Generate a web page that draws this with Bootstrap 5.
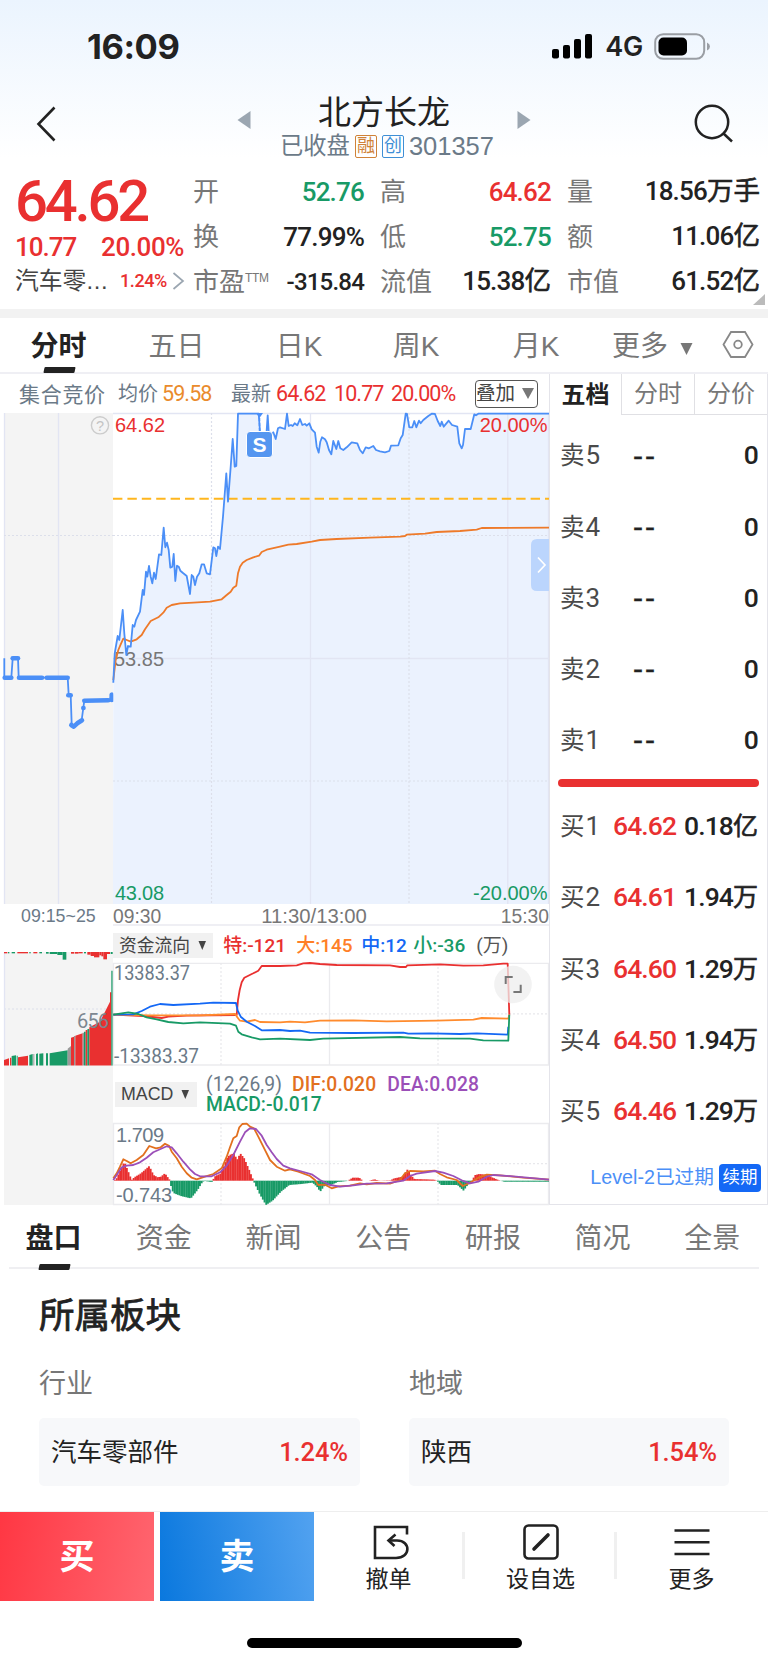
<!DOCTYPE html>
<html lang="zh-CN">
<head>
<meta charset="utf-8">
<meta name="viewport" content="width=device-width, initial-scale=1">
<title>北方长龙 301357</title>
<link rel="stylesheet" href="https://cdn.jsdelivr.net/npm/bootstrap@5.3.0/dist/css/bootstrap.min.css">
<style>
:root{--up:#e93030;--down:#189a66;--ink:#222;--mute:#777;--slate:#6b7a88;--line:#efeff4}
body{width:768px;height:1662px;margin:0;background:#fff;color:var(--ink);font-family:"Liberation Sans","Noto Sans CJK SC",sans-serif;line-height:1;overflow:hidden;white-space:nowrap}
svg{display:block;flex:none;overflow:visible}
.din{font-family:Roboto,"Noto Sans CJK SC",sans-serif}
.up{color:var(--up)}.down{color:var(--down)}.slate{color:var(--slate)}.mute{color:var(--mute)}
.hero{height:168px;background:linear-gradient(#ebf4fe,#fff 158px)}
.status-row{height:90px;padding:2px 57px 0 87px}
.clock{font:700 34.5px Inter,sans-serif;letter-spacing:-.4px}
.net{font:600 27px Inter,sans-serif;letter-spacing:-.2px}
.title-row{height:78px;padding:0 34px 0 36px}
.stock{font-size:33px;height:37px;line-height:37px}
.sub{font-size:23.3px;height:27px;color:var(--slate)}
.tag{width:22px;height:23px;border:1px solid;border-radius:2px;font-size:18px;line-height:20px;text-align:center}
.quote{height:141px;padding-right:8px}
.q-left{width:193px;padding-left:15px}
.big{font-weight:500;font-size:58px;letter-spacing:-3.2px;height:65px;line-height:67px}
.chg{font-size:26px;font-weight:500;letter-spacing:-1px;height:28px;line-height:28px}
.q-grid{display:grid;grid-template-columns:187px 187px 193px;grid-auto-rows:45px;padding-top:1px}
.q-grid>div{display:flex;justify-content:space-between;align-items:center;padding-right:16px;font-size:26px;color:var(--mute)}
.q-grid>div:nth-child(3n){padding-right:0}
.q-grid b{font-weight:500;letter-spacing:-.8px;color:var(--ink)}
.q-grid b i{font-style:normal;font-weight:400;letter-spacing:0;font-size:26.5px;-webkit-text-stroke:.6px}
.q-grid b.up{color:var(--up)}.q-grid b.down{color:var(--down)}
.q-grid sup{font-size:12px;top:-9px;letter-spacing:-.3px}
.band{height:9px;background:#f2f2f2}
.k-tabs{height:56px;border-bottom:2px solid var(--line);font-size:28px;color:var(--mute)}
.k-tabs>span{display:flex;justify-content:center;align-items:center;height:54px;position:relative;padding-top:4px}
.on{color:var(--ink)!important;font-weight:700}
.on::after{content:"";position:absolute;bottom:-1px;left:50%;width:31px;margin-left:-15px;height:6px;background:var(--ink);transform:skewX(-12deg);border-radius:1px}
.main{height:831px}
.left-pane{width:549px}
.info{height:39px;font-size:21px;padding-top:1px}
.info .din{font-size:21.5px;letter-spacing:-.9px}
.pick{width:63px;height:28px;border:1px solid #555;border-radius:4px;font-size:19.5px;color:#444}
.axis{height:22px;font-size:19.3px;color:#777;border-bottom:2px solid var(--line);padding-top:5px}
.chip{background:#f1f1f1;color:#444;height:25px;font-size:17.8px;padding:0 6px 0 6px}
.fund-head{height:37px;font-size:19px;font-weight:500}
.macd-head{height:57px;font-size:19.3px;font-weight:500}
.auction{width:113px}.session{width:436px}
.auction .cap{height:47px;font-size:17.8px;color:var(--slate);padding:4px 0 0 21px}
.book{width:219px;border:solid #e4e4ea;border-width:0 1px 1px 1px}
.b-tabs{height:41px;font-size:24px}
.b-tabs span{display:flex;align-items:center;justify-content:center;color:var(--mute)}
.b-tabs span+span{border-left:1px solid #e0e0e4;border-bottom:1px solid #e0e0e4}
.lv{display:grid;grid-template-columns:53px 1fr auto;align-items:center;height:71.2px;padding:0 9px 0 10px;font-size:24.5px;color:#4a4a4a}
.lv>b{font-weight:500;font-size:26.5px;letter-spacing:-.9px}
.lv>b.nil{font:400 30px "Liberation Sans",sans-serif;letter-spacing:2px;-webkit-text-stroke:.4px;color:#222}
.lv>b:last-child{color:var(--ink);text-align:right}
.lv>b i{font-style:normal;font-weight:400;letter-spacing:0;font-size:25px;-webkit-text-stroke:.6px}
.lv>span .din{font-size:26px;margin-left:1px}
.split{height:8px;border-radius:4px;background:var(--up);margin:0 8px 0 8px}
.level{height:30px;font-size:19.7px;color:#4b8ff7;padding-right:6px}
.renew{background:#1468f5;color:#fff;border-radius:4px;width:42px;height:28px;font-size:17.5px}
.f-tabs{height:64px;margin:0 9px;border-bottom:2px solid #efeff2;font-size:28px}
.f-tabs span{position:relative;width:109.7px;height:64px;display:flex;align-items:center;justify-content:center;color:var(--mute);flex:none;padding-top:4px}
.sector{padding:24px 39px 0 39px;height:242px}
.sector h2{font-size:35.5px;line-height:46px;margin:0;font-weight:400;-webkit-text-stroke:.8px}
.pill{height:68px;border-radius:5px;background:#f7f8fa;font-size:25.5px;padding:1px 12px 0}
.pill b{font-weight:500;font-size:25.5px;letter-spacing:-.1px}
.dock{height:90px;border-top:1px solid #eee}
.trade{height:89px;width:154px;color:#fff;font-size:35px;font-weight:700}
.buy{background:linear-gradient(100deg,#ff3743,#ff6670)}
.sell{background:linear-gradient(80deg,#0a78de,#52a2f0);margin-left:6px}
.act{height:89px;font-size:23px;position:relative}
.act+.act::before{content:"";position:absolute;left:-1px;top:20px;width:3px;height:47px;background:#f0f0f0}
.home-bar{width:275px;height:10px;border-radius:5px;background:#000;margin:37px 0 0 247px}
svg text{font-family:"Liberation Sans",sans-serif;font-size:20px}
svg text.d{font-family:Roboto,sans-serif;font-size:20px}
.g{stroke:#e2e5f3;stroke-width:1.3;fill:none}.gd{stroke:#dcdfea;stroke-width:1.2;stroke-dasharray:2 2;fill:none}
.h{stroke:#ebebee;stroke-width:1.3;fill:none}.hd{stroke:#e8e8ec;stroke-width:1.2;stroke-dasharray:2 2;fill:none}
.ln{fill:none;stroke-width:1.8;stroke-linejoin:round}
</style>
</head>
<body>
<header class="hero">
  <div class="status-row d-flex align-items-center">
    <span class="clock">16:09</span>
    <svg class="ms-auto" width="41" height="26" viewBox="0 0 41 26"><g fill="#000"><rect x="0" y="16" width="7" height="9.500" rx="2"/><rect x="11" y="12" width="7" height="13.500" rx="2"/><rect x="22" y="6" width="7" height="19.500" rx="2"/><rect x="33" y="1" width="7" height="24.500" rx="2"/></g></svg>
    <span class="net" style="margin-left:12px">4G</span>
    <svg style="margin-left:11px" width="57" height="27" viewBox="0 0 57 27"><rect x="1.200" y="1.200" width="49" height="24.600" rx="8" fill="none" stroke="#9a9ea4" stroke-width="2"/><rect x="4.500" y="4.500" width="28.500" height="18" rx="5"/><path d="M53 9.500q3 1.500 3 4t-3 4z" fill="#9a9ea4"/></svg>
  </div>
  <div class="title-row d-flex">
    <svg width="22" height="36" viewBox="0 0 22 36" style="margin-top:16px"><path d="M18.500 1.500 2.500 18l16 16.500" fill="none" stroke="#222" stroke-width="2.600"/></svg>
    <svg width="14" height="20" style="margin:20px 0 0 179px"><path d="M13.500 1v18L.500 10z" fill="#9ba6b1"/></svg>
    <div class="d-flex flex-column align-items-center" style="width:266px;padding-top:4px">
      <div class="stock">北方长龙</div>
      <div class="sub d-flex align-items-center" style="gap:5px;margin-left:6px;margin-top:2px"><span>已收盘</span><span class="tag" style="color:#d08238">融</span><span class="tag" style="color:#3f8fd6">创</span><span style="font-size:25.500px">301357</span></div>
    </div>
    <svg width="14" height="20" style="margin:20px 0 0"><path d="M.500 1v18l13-9z" fill="#9ba6b1"/></svg>
    <svg class="ms-auto" width="40" height="40" viewBox="694 103 40 40" style="margin-top:13px"><g fill="none" stroke="#222" stroke-width="2.500"><circle cx="712" cy="122" r="16.200"/><path d="m723.500 133.500 8.500 8"/></g></svg>
  </div>
</header>

<section class="quote d-flex position-relative">
  <div class="q-left">
    <div class="big din up">64.62</div>
    <div class="chg din up d-flex"><span style="width:86px">10.77</span><span style="letter-spacing:-.4px">20.00%</span></div>
    <div class="d-flex align-items-center" style="height:36px;font-size:23.800px;color:#444;margin-top:2px"><span style="width:105px">汽车零<span style="letter-spacing:.7px">...</span></span><span class="din up" style="font-size:18px;font-weight:500;letter-spacing:-.4px;width:52px">1.24%</span><svg width="13" height="18"><path d="m1.500 1 9.500 8-9.500 8" fill="none" stroke="#9ba6b1" stroke-width="1.700"/></svg></div>
  </div>
  <div class="q-grid">
    <div>开<b class="din down">52.76</b></div><div>高<b class="din up">64.62</b></div><div>量<b class="din">18.56<i>万手</i></b></div>
    <div>换<b class="din">77.99%</b></div><div>低<b class="din down">52.75</b></div><div>额<b class="din">11.06<i>亿</i></b></div>
    <div><span>市盈<sup>TTM</sup></span><b class="din" style="font-size:24px">-315.84</b></div><div>流值<b class="din">15.38<i>亿</i></b></div><div>市值<b class="din">61.52<i>亿</i></b></div>
  </div>
  <svg class="position-absolute" style="right:3px;bottom:4px" width="12" height="11"><path d="M12 0v11H0z" fill="#bbb"/></svg>
</section>
<div class="band"></div>

<nav class="k-tabs d-flex">
  <span class="on" style="width:117px">分时</span><span style="width:119px">五日</span><span style="width:126px">日K</span><span style="width:108px">周K</span><span style="width:132px">月K</span>
  <span style="padding-left:10px">更多</span><span style="padding-left:12px"><svg width="13" height="12" style="margin-top:3px"><path d="M.500 0h12l-6 12z" fill="#777"/></svg></span>
  <span class="ms-auto" style="padding:0 14px 0 0"><svg width="32" height="30" viewBox="0 0 32 30"><g fill="none" stroke="#888" stroke-width="1.800"><path d="M9 2h14l7.500 12.500L23 27H9L1.500 14.500z"/><circle cx="16" cy="14.500" r="3.800"/></g></svg></span>
</nav>

<main class="main d-flex">
  <div class="left-pane">
    <div class="info d-flex align-items-center">
      <span class="slate" style="margin-left:19px;width:99px;letter-spacing:.7px">集合竞价</span><span class="slate" style="width:44px;font-size:20px">均价</span><span class="din" style="width:69px;color:#ea8b2c">59.58</span><span class="slate" style="width:45px;font-size:20px">最新</span><span class="din up" style="width:58px">64.62</span><span class="din up" style="width:57px">10.77</span><span class="din up" style="width:84px">20.00%</span>
      <span class="pick d-flex align-items-center">叠加<svg width="13" height="12" style="margin-left:7px"><path d="M0 0h12L6 11z" fill="#777"/></svg></span>
    </div>
    <div class="d-flex">
      <div class="auction">
        <svg id="auction" width="113" height="491" viewBox="0 413 113 491">
          <rect x="4" y="413" width="109" height="491" fill="#f4f4f4"/>
          <path class="g" d="M58.500 413v491M4.500 413v491"/><path class="gd" d="M4 535.500h109"/>
          <circle cx="100" cy="425.300" r="8.600" fill="none" stroke="#ccc" stroke-width="1.400"/><text x="100" y="430.500" text-anchor="middle" style="font-size:14.500px" fill="#c4c4c4">?</text>
        </svg>
        <div class="cap">09:15~25</div>
        <svg id="volume" width="113" height="254" viewBox="0 951 113 254">
          <rect x="4" y="952" width="109" height="253" fill="#f4f4f4"/>
          <path class="gd" d="M4 1009h109"/><path class="g" d="M4.500 952v113"/>
        </svg>
      </div>
      <div class="session">
        <svg id="price" width="436" height="491" viewBox="113 413 436 491"></svg>
        <div class="axis d-flex align-items-center"><span>09:30</span><span style="font-size:20.300px;margin-left:100px">11:30/13:00</span><span class="ms-auto">15:30</span></div>
        <div class="fund-head din d-flex align-items-center" style="padding-top:2px">
          <span class="chip d-flex align-items-center fw-normal">资金流向<svg width="9" height="9" style="margin-left:8px"><path d="M.500 0h7.500L4.300 9z" fill="#444"/></svg></span>
          <span class="up" style="margin-left:10px;width:73px">特:-121</span><span style="width:65px;color:#ff7f27">大:145</span><span style="width:52px;color:#1468f5">中:12</span><span class="down" style="width:63px">小:-36</span><span class="fw-normal" style="color:#555">(万)</span>
        </div>
        <svg id="fund" width="436" height="103" viewBox="113 963 436 103"></svg>
        <div class="macd-head din d-flex align-items-center" style="padding-left:2px">
          <span class="chip d-flex align-items-center fw-normal" style="width:82px;font-family:'Liberation Sans'">MACD<svg width="9" height="9" style="margin-left:8px"><path d="M.500 0h7.500L4.300 9z" fill="#444"/></svg></span>
          <span style="margin-left:9px;line-height:20px"><span class="slate fw-normal" style="margin-right:10px;letter-spacing:.1px">(12,26,9)</span><span style="color:#e2701f;margin-right:11px;letter-spacing:.15px">DIF:0.020</span><span style="color:#9b4fb8;letter-spacing:.15px">DEA:0.028</span><br><span class="down">MACD:-0.017</span></span>
        </div>
        <svg id="macd" width="436" height="82" viewBox="113 1123 436 82"></svg>
      </div>
    </div>
  </div>
  <aside class="book">
    <div class="b-tabs d-flex"><span class="fw-bold" style="width:71px;color:#222">五档</span><span style="width:73px">分时</span><span style="width:73px">分价</span></div>
    <div id="asks" style="padding-top:5px"></div>
    <div class="split" style="margin-top:3px"></div>
    <div id="bids" style="padding-top:4px"></div>
    <div class="level d-flex align-items-center justify-content-end" style="margin-top:16px"><span>Level-2已过期</span><span class="renew d-flex align-items-center justify-content-center" style="margin-left:5px">续期</span></div>
  </aside>
</main>

<nav class="f-tabs d-flex"><span class="on" style="width:89px">盘口</span><span style="margin-left:11px">资金</span><span>新闻</span><span>公告</span><span>研报</span><span>简况</span><span>全景</span></nav>
<section class="sector">
  <h2>所属板块</h2>
  <div class="row gx-5" style="margin-top:30px">
    <div class="col-6"><div class="mute" style="font-size:27px;line-height:30px;margin-bottom:19px">行业</div><div class="pill d-flex align-items-center justify-content-between" style="width:321px"><span>汽车零部件</span><b class="din up">1.24%</b></div></div>
    <div class="col-6"><div class="mute" style="font-size:27px;line-height:30px;margin:0 0 19px 1px">地域</div><div class="pill d-flex align-items-center justify-content-between" style="width:320px;margin-left:1px"><span>陕西</span><b class="din up">1.54%</b></div></div>
  </div>
</section>
<footer>
  <div class="dock d-flex">
    <div class="trade buy d-flex align-items-center justify-content-center">买</div>
    <div class="trade sell d-flex align-items-center justify-content-center">卖</div>
    <div class="act d-flex flex-column align-items-center" style="width:149px"><svg width="38" height="36" viewBox="0 0 38 36" style="margin:12px 0 0 4px"><g fill="none" stroke="#222" stroke-width="2.600"><path d="M35 10.500V3H3v31h21c15 0 15-17.500 1-17.500h-7"/><path d="m23.500 10.500-7 6 6 5.500"/></g></svg><span style="margin-top:8px">撤单</span></div>
    <div class="act d-flex flex-column align-items-center" style="width:152px;padding-left:3px"><svg width="38" height="36" viewBox="0 0 38 36" style="margin-top:12px"><rect x="2.500" y="1.500" width="33" height="33" rx="4" fill="none" stroke="#222" stroke-width="2.600"/><path d="m12 25 14-14" stroke="#222" stroke-width="3.600" stroke-linecap="round"/></svg><span style="margin-top:8px">设自选</span></div>
    <div class="act d-flex flex-column align-items-center" style="width:153px"><svg width="38" height="36" viewBox="0 0 38 36" style="margin-top:12px"><path d="M1.500 6.500h35M1.500 18.300h35M1.500 30h35" stroke="#222" stroke-width="2.600"/></svg><span style="margin-top:8px">更多</span></div>
  </div>
  <div class="home-bar"></div>
</footer>

<script src="https://cdn.jsdelivr.net/npm/bootstrap@5.3.0/dist/js/bootstrap.bundle.min.js"></script>
<script>
// Series are x,y pairs in third-of-a-pixel units; dy is the pane's origin.
const pts=(s,dy)=>{const n=s.trim().split(/[ ,]+/).map(Number),o=[];for(let i=0;i<n.length;i+=2)o.push([n[i]/3,dy+n[i+1]/3]);return o};
const str=p=>p.map(a=>a[0].toFixed(1)+','+a[1].toFixed(1)).join(' ');
const line=(s,dy,c,w)=>`<polyline class="ln" points="${str(pts(s,dy))}" stroke="${c}"${w?` style="stroke-width:${w}"`:''}/>`;
const add=(id,h)=>document.getElementById(id).insertAdjacentHTML('beforeend',h);
const R='#e93030',G='#189a66',B='#4b8ff7';

const price='340,848 344,760 353,708 358,720 368,630 373,700 379,765 384,738 392,740 398,675 403,680 408,660 420,635 428,570 432,585 438,515 442,530 447,498 452,530 457,550 462,518 467,537 477,463 484,465 491,383 496,442 501,428 506,450 511,503 517,500 521,462 526,543 531,497 536,500 541,512 550,520 560,528 570,582 575,525 580,530 585,555 591,530 598,520 605,493 612,493 620,520 630,523 640,442 645,445 649,468 654,440 660,447 669,350 679,220 684,305 692,200 698,117 704,200 709,198 714,41 776,41 780,95 798,120 803,46 807,110 820,97 827,117 834,85 840,82 855,87 861,41 866,78 873,75 878,78 884,70 892,76 900,57 907,75 915,72 920,77 928,70 935,88 945,98 950,140 956,158 961,125 966,112 975,118 980,127 987,150 994,163 1000,123 1009,147 1015,123 1021,145 1030,150 1040,142 1055,127 1072,130 1080,150 1088,160 1097,142 1107,145 1120,138 1128,150 1140,154 1155,157 1168,153 1173,137 1195,136 1202,115 1208,105 1217,41 1221,42 1228,82 1237,82 1243,63 1249,82 1257,62 1262,70 1270,60 1285,48 1295,41 1305,42 1313,63 1321,78 1325,65 1331,80 1346,62 1356,75 1372,80 1378,130 1385,145 1389,135 1395,87 1412,87 1423,43 1428,46 1435,41 1648,41';
const avg='340,840 347,780 355,750 362,733 370,716 380,720 392,725 410,718 425,705 435,688 452,663 475,652 490,638 500,623 515,615 540,610 580,608 630,605 665,598 680,585 692,575 700,563 709,557 714,520 720,500 728,488 740,480 760,472 777,467 785,456 800,449 840,440 865,434 890,432 935,425 960,420 1010,417 1110,413 1200,410 1215,408 1220,404 1275,401 1310,396 1380,393 1430,389 1445,384 1648,383';
add('price',`<polygon points="${str(pts(price,400))} 549,904 113,904" fill="#ebf2fe"/>
<path class="g" d="M113 413.500h436M113 658.500h436M310.500 413v491M507.800 413v491"/><path class="gd" d="M113 535.500h436M113 781h436M211.500 413v491M409 413v491"/>
<path class="g" d="M548.500 413v491"/>
<path d="M113 498.700h436" stroke="#ffb61e" stroke-width="1.900" stroke-dasharray="9.400 5"/>
<text x="114" y="665.500" fill="#777" textLength="50">53.85</text>`
+line(avg,400,'#ee7a2a')+line(price,400,B)
+`<path d="M256 413h7l-3.500 5z" fill="${B}"/><path d="M259.500 418v14" stroke="${B}" stroke-width="1.500" stroke-dasharray="3 2"/>
<rect x="246.500" y="431.500" width="26" height="26" rx="3.500" fill="#5596f0" stroke="#fff" stroke-width="1"/><text x="259.500" y="451.500" text-anchor="middle" fill="#fff" style="font-weight:700;font-size:21px">S</text>
<text x="115" y="432" fill="${R}">64.62</text><text x="547.500" y="432" text-anchor="end" fill="${R}">20.00%</text>
<text x="115" y="900" fill="${G}" textLength="49">43.08</text><text x="547.500" y="900" text-anchor="end" fill="${G}">-20.00%</text>
<path d="M549 539h-12q-6 0-6 6v40q0 6 6 6h12z" fill="#bbd5fd"/><path d="m538 557.500 7 7.500-7 7.500" fill="none" stroke="#fff" stroke-width="1.700"/>`);

add('auction',line('13,775 13,833 34,833 38,775 54,775 56,833 203,833 206,886 212,886 215,975 221,980 245,960 250,924 253,902 330,900 336,880 338,905',400,B)
+`<g stroke-linecap="round">${['14,833 34,833','38,775 54,775','57,833 126,833','140,833 203,833','205,886 212,886','214,975 221,980 232,970 246,961','250,924 250.5,924','253,902 325,901','335,884 335,900'].map(s=>line(s,400,B,4.6)).join('')}</g>`);

let vol='';
[[12,27,540,535,R],[30,34,533,533,R],[35,48,528,526,G],[50,53,527,527,G],[54,84,532,527,R],[88,98,525,522,G],[100,103,522,522,'#999'],[108,114,522,520,G],[118,130,521,520,G],[138,144,520,520,G],[149,203,520,511,G],[203,213,506,498,'#999'],[213,222,473,470,R],[222,226,468,468,'#999'],[226,248,467,460,R],[248,252,458,458,'#999'],[252,257,455,455,G],[257,262,450,450,R],[262,268,448,446,G],[268,300,442,425,R],[300,330,425,365,R],[330,334,337,337,R],[334,338,272,272,G],
].forEach(([a,b,y0,y1,c])=>{vol+=`<polygon points="${a/3},${880+y0/3} ${b/3},${880+y1/3} ${b/3},1065.6 ${a/3},1065.6" fill="${c}"/>`});
[[12,22,4,R],[24,28,4,G],[35,45,4,G],[52,84,4,R],[88,92,4,G],[100,112,4,R],[118,126,4,G],[138,146,5,G],[149,172,6,G],[172,188,9,G],[188,199,23,G],[213,223,5,R],[225,235,5,R],[235,248,4,R],[252,258,4,G],[262,272,8,R],[272,282,12,R],[282,298,16,R],[298,304,10,R],[304,310,13,R],[310,321,22,R],[321,330,6,R],[332,338,6,G]].forEach(([a,b,h,c])=>vol+=`<rect x="${a/3}" y="952" width="${(b-a)/3}" height="${h/3}" fill="${c}"/>`);
add('volume',vol+'<text class="d" x="77" y="1028" fill="#7d8791" textLength="32">656</text>');

add('fund','<path class="h" d="M113 963.300h436M113 1065h436M329.500 963v102M548.500 963v102M113.500 963v102"/><path class="hd" d="M113 1013.800h436M221 963v102M438 963v102"/>'
+'<text class="d" x="114" y="980" fill="#6b7a88" textLength="76" lengthAdjust="spacingAndGlyphs">13383.37</text><text class="d" x="114" y="1062.500" fill="#6b7a88" textLength="85" lengthAdjust="spacingAndGlyphs">-13383.37</text>'
+line('340,404 430,408 485,414 505,410 560,407 710,405 714,360 719,330 725,307 733,293 760,280 775,272 785,258 840,258 890,256 910,250 930,249 960,252 1010,255 1170,256 1200,261 1218,261 1222,256 1320,253 1390,257 1450,256 1510,251 1523,251 1528,404',880,R)
+line('340,404 450,406 600,406 706,402 712,412 720,422 740,425 765,420 780,426 840,427 870,425 915,427 960,422 1060,421 1160,424 1310,422 1420,419 1445,414 1525,416 1528,404',880,'#ff8b2d')
+line('340,404 400,403 425,393 450,380 480,372 520,375 600,371 640,368 708,369 713,392 722,410 740,425 765,438 785,451 840,450 870,453 900,452 930,458 1060,459 1210,458 1225,461 1290,460 1380,462 1430,460 1523,464 1525,440',880,'#1468f5')
+line('340,404 385,397 415,402 440,412 470,418 505,426 550,430 600,427 690,431 708,437 715,455 725,463 755,472 780,478 840,476 930,480 970,476 1200,471 1260,475 1410,476 1450,481 1525,482 1528,404',880,G)
+'<circle cx="513" cy="984.500" r="18.800" fill="#ededed" opacity=".75"/><path d="M505.700 984v-7h7M520.700 984.700v7.300h-7.300" fill="none" stroke="#777" stroke-width="2"/>');

const at=(p,x)=>{for(let i=1;i<p.length;i++)if(x<=p[i][0])return p[i-1][1]+(p[i][1]-p[i-1][1])*(x-p[i-1][0])/(p[i][0]-p[i-1][0]);return 1180.7};
const hist=pts('340,902 346,897 370,845 385,882 392,900 400,892 420,880 445,858 458,885 470,892 480,890 492,880 505,898 508,902 512,930 520,940 540,948 570,955 590,930 605,905 612,903 632,906 636,902 640,890 660,880 680,830 690,823 700,820 708,840 718,820 730,835 745,870 757,900 762,912 775,940 795,975 815,962 840,935 865,915 900,912 935,908 948,920 958,935 970,918 990,915 1010,906 1040,903 1055,893 1075,893 1085,902 1105,902 1120,898 1135,902 1168,901 1180,895 1205,890 1220,868 1230,885 1240,897 1300,899 1308,902 1320,915 1370,915 1388,932 1400,915 1415,904 1420,886 1435,882 1460,885 1475,893 1495,901 1510,905 1648,905',880);
let bars='';
for(let x=114;x<549;x+=1.7){const y=at(hist,x),z=1180.7;bars+=`<rect x="${x.toFixed(1)}" y="${Math.min(y,z).toFixed(1)}" width="1.9" height="${Math.abs(y-z).toFixed(1)}" fill="${y<z?R:G}"/>`}
add('macd','<path class="h" d="M113 1123.500h436M113 1204.500h436M329.500 1123v82M548.500 1123v82M113.500 1123v82"/><path class="hd" d="M113 1163.700h436M221 1123v82M438 1123v82"/>'
+'<text x="116" y="1142" fill="#6b7a88" textLength="48">1.709</text>'+bars+'<text x="116" y="1202" fill="#6b7a88" textLength="56">-0.743</text>'
+line('340,895 350,880 360,860 370,838 380,843 392,850 410,840 430,825 448,798 468,805 482,802 495,791 507,797 515,815 530,835 545,860 560,880 575,893 590,898 615,890 640,882 665,865 680,830 690,802 700,775 710,768 718,742 727,732 740,731 750,740 762,745 775,770 790,800 810,840 830,860 855,872 870,868 895,875 930,888 945,900 955,915 975,914 995,925 1015,919 1050,917 1080,910 1100,913 1130,909 1170,911 1200,900 1215,880 1230,873 1270,874 1305,872 1320,882 1340,892 1370,900 1388,918 1410,908 1435,893 1460,884 1500,886 1570,893 1648,899',880,'#e2701f')
+line('340,900 350,885 365,862 380,857 400,855 420,847 440,833 460,817 480,808 500,799 515,802 530,820 550,845 570,868 585,882 600,889 635,889 660,877 680,857 700,825 720,785 735,757 750,745 768,747 785,767 800,795 815,817 830,837 850,857 870,865 900,873 935,883 960,900 990,915 1020,920 1060,916 1100,911 1160,910 1210,902 1230,888 1250,881 1305,873 1330,878 1360,888 1385,901 1410,910 1435,905 1460,890 1480,885 1540,889 1648,899',880,'#9b4fb8'));

document.getElementById('asks').innerHTML=[5,4,3,2,1].map(n=>`<div class="lv" style="grid-template-columns:73px 1fr auto"><span>卖<span class="din">${n}</span></span><b class="nil">--</b><b class="din">0</b></div>`).join('');
document.getElementById('bids').innerHTML=[['64.62','0.18','亿'],['64.61','1.94','万'],['64.60','1.29','万'],['64.50','1.94','万'],['64.46','1.29','万']].map((r,i)=>`<div class="lv"><span>买<span class="din">${i+1}</span></span><b class="din up">${r[0]}</b><b class="din">${r[1]}<i>${r[2]}</i></b></div>`).join('');
</script>
</body>
</html>
